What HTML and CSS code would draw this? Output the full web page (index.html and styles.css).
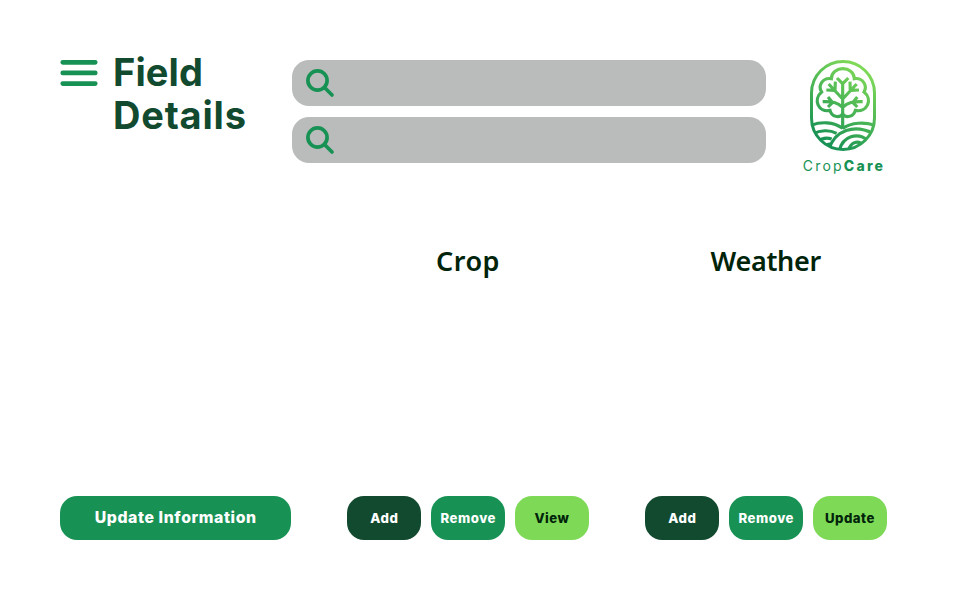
FILE: index.html
```html
<!DOCTYPE html>
<html lang="en">
<head>
<meta charset="utf-8">
<title>Field Details</title>
<link rel="stylesheet" href="styles.css">
</head>
<body>
<header class="top">
  <svg class="menu" viewBox="0 0 38 28"><path d="M2.8 3.3H35.2M2.8 13.9H35.2M2.8 24.6H35.2"/></svg>
  <h1 class="title">Field<br><span class="details">Details</span></h1>
  <div class="searches">
    <div class="search"><svg viewBox="0 0 30 30"><circle cx="12.5" cy="12.5" r="9.6"/><path d="M19.5 19.5L27 27"/></svg></div>
    <div class="search"><svg viewBox="0 0 30 30"><circle cx="12.5" cy="12.5" r="9.6"/><path d="M19.5 19.5L27 27"/></svg></div>
  </div>
  <div class="brand">
    <svg class="logo" viewBox="45 30 198 273">
      <defs>
        <linearGradient id="leaf" gradientUnits="userSpaceOnUse" x1="75" y1="265" x2="215" y2="65">
          <stop offset="0" stop-color="#189254"/><stop offset="1" stop-color="#7ed957"/>
        </linearGradient>
        <clipPath id="frame"><rect x="49" y="34" width="190" height="265" rx="95"/></clipPath>
      </defs>
      <g fill="none" stroke="url(#leaf)" stroke-width="9.5">
        <rect x="49.500" y="34.500" width="189" height="264" rx="94.500" stroke-width="9"/>
        <path d="M109 86C110 46 177 46 178 86C202 82 219 106 207 126C235 148 216 189 181 181C176 201 153 205 143 192C133 205 110 201 105 181C70 189 53 148 80 126C67 106 84 82 109 86Z"/>
        <path d="M143 98V236M126 84L143 101L160 84M143 147L101 102M120 125L121 95M118 121L94 120M143 147L185 102M166 125L165 95M168 121L192 120M143 172C128 157 112 154 83 155M112 157L99 141M113 157L99 171M143 172C158 157 174 154 203 155M174 157L187 141M173 157L187 171"/>
        <g clip-path="url(#frame)">
          <path d="M48 226C78 214 115 215 143 235M54 252C75 240 104 239 125 250M68 275C82 263 96 262 110 267M86 291Q94 282 105 282"/>
          <path d="M143 235C170 217 208 215 240 226M102 298C119 239 179 222 234 250M133 302C143 258 187 245 220 272M160 302C167 275 191 268 205 287"/>
        </g>
      </g>
    </svg>
    <div class="name">Crop<b>Care</b></div>
  </div>
</header>
<section class="heads">
  <h2 class="crop">Crop</h2>
  <h2 class="weather">Weather</h2>
</section>
<footer class="actions">
  <button class="btn wide green">Update Information</button>
  <div class="group">
    <button class="btn dark">Add</button><button class="btn green">Remove</button><button class="btn lime">View</button>
  </div>
  <div class="group second">
    <button class="btn dark">Add</button><button class="btn green">Remove</button><button class="btn lime">Update</button>
  </div>
</footer>
</body>
</html>
```
FILE: styles.css
```css
* { box-sizing: border-box; }
body { margin: 0; width: 960px; height: 600px; background: #fff; font-family: Inter, "Liberation Sans", sans-serif; overflow: hidden; }
svg { display: block; }
.top { display: flex; align-items: flex-start; height: 239px; padding: 50px 0 0 60px; }
.menu { width: 38px; height: 28px; margin-top: 9px; fill: none; stroke: #189254; stroke-width: 4.8; stroke-linecap: round; }
.title { width: 178px; margin: 1px 0 0 15px; color: #124a2f; font-size: 38px; line-height: 43px; font-weight: 750; white-space: nowrap; letter-spacing: .1px; }
.details { letter-spacing: .8px; }
.searches { display: flex; flex-direction: column; gap: 11.500px; width: 474px; margin: 10px 0 0 .5px; }
.search { height: 45.500px; padding: 8px 0 0 13.200px; border-radius: 17px; background: #babcbb; }
.search svg { width: 30px; height: 30px; fill: none; stroke: #189254; stroke-width: 3.7; stroke-linecap: round; }
.brand { display: flex; flex-direction: column; align-items: center; width: 84px; margin: 10px 0 0 35.500px; }
.logo { width: 66px; height: 91px; }
.name { margin: 6px 0 0 2px; color: #189254; font-size: 14px; line-height: 18px; letter-spacing: 2.200px; white-space: nowrap; }
.name b { font-weight: 800; }
.heads { display: flex; height: 257px; padding-left: 436px; }
.heads h2 { margin: 0; color: #00240a; font: 600 27px/44px "Noto Sans", sans-serif; }
.crop { width: 274.500px; letter-spacing: .5px; }
.heads .weather { letter-spacing: -.3px; }
.actions { display: flex; padding-left: 60px; }
.btn { width: 74.400px; height: 44px; padding: 0 0 0 .4px; border: 0; border-radius: 17px; font: 800 13.200px/42px Inter, sans-serif; letter-spacing: .5px; color: #fff; text-align: center; white-space: nowrap; }
.wide { width: 231px; font-size: 15.800px; letter-spacing: .6px; }
.green { background: #189254; }
.dark { background: #124a2f; }
.lime { width: 74px; background: #7ed957; color: #00240a; }
.group { display: flex; gap: 9.500px; margin-left: 56px; }
.second { margin-left: 56.200px; }
```
